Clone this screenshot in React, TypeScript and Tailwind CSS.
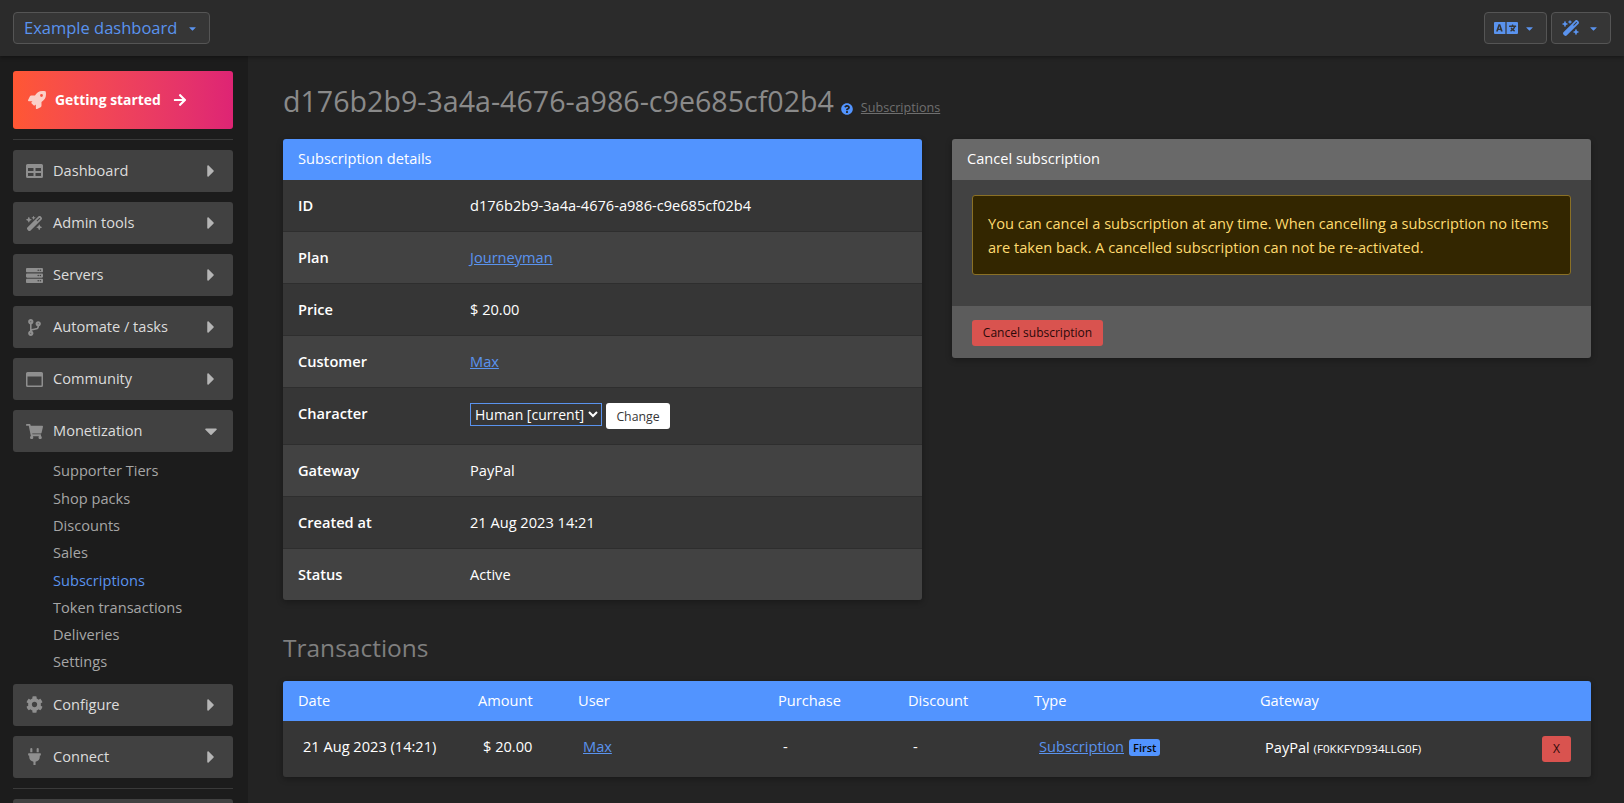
import {
  FaArrowRight,
  FaCaretDown,
  FaCaretRight,
  FaCodeBranch,
  FaCog,
  FaLanguage,
  FaPlug,
  FaQuestionCircle,
  FaRocket,
  FaServer,
  FaShoppingCart,
} from 'react-icons/fa';
import { FaWandMagicSparkles } from 'react-icons/fa6';
import type { ReactNode } from 'react';

function DashboardIcon() {
  return (
    <svg width="17" height="14" viewBox="0 0 17 14">
      <path
        fill="currentColor"
        fillRule="evenodd"
        d="M1.5 0h14A1.5 1.5 0 0 1 17 1.5v11a1.5 1.5 0 0 1-1.5 1.5h-14A1.5 1.5 0 0 1 0 12.5v-11A1.5 1.5 0 0 1 1.5 0ZM2 4v3h5.5V4H2Zm7.5 0v3H15V4H9.5ZM2 9v3h5.5V9H2Zm7.5 0v3H15V9H9.5Z"
      />
    </svg>
  );
}

function WindowIcon() {
  return (
    <svg width="17" height="15" viewBox="0 0 17 15">
      <path
        fill="currentColor"
        fillRule="evenodd"
        d="M1.5 0h14A1.5 1.5 0 0 1 17 1.5v12a1.5 1.5 0 0 1-1.5 1.5h-14A1.5 1.5 0 0 1 0 13.5v-12A1.5 1.5 0 0 1 1.5 0ZM1.5 4.5v8.5a.5.5 0 0 0 .5.5h13a.5.5 0 0 0 .5-.5V4.5h-14Z"
      />
    </svg>
  );
}

function NavItem({ icon, label, open }: { icon: ReactNode; label: string; open?: boolean }) {
  return (
    <div className="flex h-[42px] shrink-0 items-center rounded-[3px] bg-[#414141] pl-[13px] pr-[12px] text-[14.6px] text-[#dcdcdc]">
      <span className="flex w-[27px] shrink-0 items-center text-[17px] text-[#8f8f8f]">{icon}</span>
      <span className="flex-1">{label}</span>
      {open ? (
        <FaCaretDown className="text-[20px] text-[#b5b5b5]" />
      ) : (
        <FaCaretRight className="text-[20px] text-[#b5b5b5]" />
      )}
    </div>
  );
}

const subItems = [
  'Supporter Tiers',
  'Shop packs',
  'Discounts',
  'Sales',
  'Subscriptions',
  'Token transactions',
  'Deliveries',
  'Settings',
];

function Sidebar() {
  return (
    <aside className="flex h-[747px] w-[248px] shrink-0 flex-col overflow-hidden bg-[#1c1c1c] pl-[13px] pr-[15px] pt-[15px]">
      <div className="flex h-[58px] shrink-0 items-center rounded-[3px] bg-gradient-to-r from-[#ff5733] to-[#de2474] pl-[15px] text-[13.9px] font-bold text-white">
        <FaRocket className="mr-[9px] text-[18px] text-[#fbd0c8]" />
        <span>Getting started</span>
        <FaArrowRight className="ml-[12px] text-[14px]" />
      </div>
      <div className="my-[10px] h-px shrink-0 bg-[#3a3a3a]" />
      <div className="flex flex-col gap-[10px]">
        <NavItem icon={<DashboardIcon />} label="Dashboard" />
        <NavItem icon={<FaWandMagicSparkles />} label="Admin tools" />
        <NavItem icon={<FaServer />} label="Servers" />
        <NavItem icon={<FaCodeBranch />} label="Automate / tasks" />
        <NavItem icon={<WindowIcon />} label="Community" />
        <NavItem icon={<FaShoppingCart />} label="Monetization" open />
      </div>
      <ul className="mt-[5.7px] mb-[7.5px] flex flex-col pl-[40px] text-[14.6px] text-[#a6a6a6]">
        {subItems.map((item) => (
          <li
            key={item}
            className={`flex h-[27.3px] items-center ${item === 'Subscriptions' ? 'text-[#5a93ee]' : ''}`}
          >
            {item}
          </li>
        ))}
      </ul>
      <div className="flex flex-col gap-[10px]">
        <NavItem icon={<FaCog />} label="Configure" />
        <NavItem icon={<FaPlug />} label="Connect" />
      </div>
      <div className="my-[10px] h-px shrink-0 bg-[#3a3a3a]" />
      <div className="h-[42px] shrink-0 rounded-[3px] bg-[#414141]" />
    </aside>
  );
}

function TopBar() {
  return (
    <header className="relative z-10 flex h-[56px] shrink-0 items-center justify-between bg-[#2b2b2b] pl-[13px] pr-[13px] shadow-[0_1px_4px_rgba(0,0,0,0.4)]">
      <button className="flex h-[32px] w-[197px] items-center rounded-[4px] border border-[#555555] bg-[#363636] pl-[10px] text-[16.5px] text-[#5a93ee]">
        Example dashboard
        <FaCaretDown className="ml-[10px] text-[11px]" />
      </button>
      <div className="flex gap-[4px]">
        <button className="flex h-[32px] w-[63px] items-center rounded-[4px] border border-[#555555] bg-[#363636] pl-[9px] text-[#5a93ee]">
          <FaLanguage className="text-[24px]" />
          <FaCaretDown className="ml-[6px] text-[11px]" />
        </button>
        <button className="flex h-[32px] w-[60px] items-center rounded-[4px] border border-[#555555] bg-[#363636] pl-[10px] text-[#5a93ee]">
          <FaWandMagicSparkles className="text-[18px]" />
          <FaCaretDown className="ml-[8px] text-[11px]" />
        </button>
      </div>
    </header>
  );
}

const detailRows = [
  { label: 'ID', value: 'd176b2b9-3a4a-4676-a986-c9e685cf02b4' },
  { label: 'Plan', value: <a className="text-[#5a93ee] underline">Journeyman</a> },
  { label: 'Price', value: '$ 20.00' },
  { label: 'Customer', value: <a className="text-[#5a93ee] underline">Max</a> },
  {
    label: 'Character',
    value: (
      <div className="flex items-start gap-[4px]">
        <select className="h-[23px] w-[132px] border border-[#5a93ee] bg-[#363636] text-[14px] text-white">
          <option>Human [current]</option>
        </select>
        <button className="h-[26px] w-[64px] rounded-[3px] bg-white text-[12.3px] text-[#363636]">Change</button>
      </div>
    ),
  },
  { label: 'Gateway', value: 'PayPal' },
  { label: 'Created at', value: '21 Aug 2023 14:21' },
  { label: 'Status', value: 'Active' },
];

function SubscriptionDetails() {
  return (
    <div className="w-[639px] shrink-0 overflow-hidden rounded-[3px] shadow-[0_2px_6px_rgba(0,0,0,0.3)]">
      <div className="flex h-[41px] items-center bg-[#5294ff] px-[15px] pb-[1px] text-[14.6px] text-white">
        Subscription details
      </div>
      <table className="w-full table-fixed text-[14.6px] text-white">
        <colgroup>
          <col className="w-[172px]" />
          <col />
        </colgroup>
        <tbody>
          {detailRows.map((row, i) => (
            <tr key={row.label} className={`${i % 2 === 0 ? 'bg-[#363636]' : 'bg-[#424242]'} border-b border-[#2e2e2e] last:border-b-0`}>
              <td className="px-[15px] py-[15px] align-top leading-[21px] font-semibold">{row.label}</td>
              <td className="px-[15px] py-[15px] align-top leading-[21px]">{row.value}</td>
            </tr>
          ))}
        </tbody>
      </table>
    </div>
  );
}

function CancelCard() {
  return (
    <div className="w-[639px] shrink-0 self-start overflow-hidden rounded-[3px] shadow-[0_2px_6px_rgba(0,0,0,0.3)]">
      <div className="flex h-[41px] items-center bg-[#696969] px-[15px] pb-[1px] text-[14.6px] text-white">
        Cancel subscription
      </div>
      <div className="h-[126px] bg-[#424242] px-[20px] pt-[15px]">
        <div className="h-[80px] rounded-[3px] border border-[#8a7025] bg-[#332600] px-[15px] py-[14.5px] text-[14.6px] leading-[24px] text-[#ffdb70]">
          You can cancel a subscription at any time. When cancelling a subscription no items are taken back. A cancelled subscription can not be re-activated.
        </div>
      </div>
      <div className="flex h-[52px] items-start bg-[#5c5c5c] px-[20px] pt-[14px]">
        <button className="h-[26px] w-[131px] rounded-[3px] bg-[#d9534f] text-[12px] text-[#2b0a0a]">
          Cancel subscription
        </button>
      </div>
    </div>
  );
}

function TransactionsTable() {
  return (
    <div className="overflow-hidden rounded-[3px] shadow-[0_2px_6px_rgba(0,0,0,0.3)]">
      <table className="w-full table-fixed text-[14.6px] text-white">
        <colgroup>
          <col className="w-[180px]" />
          <col className="w-[100px]" />
          <col className="w-[200px]" />
          <col className="w-[130px]" />
          <col className="w-[126px]" />
          <col className="w-[226px]" />
          <col />
        </colgroup>
        <thead className="bg-[#5294ff]">
          <tr className="h-[40px] text-left">
            <th className="px-[15px] font-normal">Date</th>
            <th className="px-[15px] font-normal">Amount</th>
            <th className="px-[15px] font-normal">User</th>
            <th className="px-[15px] font-normal">Purchase</th>
            <th className="px-[15px] font-normal">Discount</th>
            <th className="px-[15px] font-normal">Type</th>
            <th className="px-[15px] font-normal">Gateway</th>
          </tr>
        </thead>
        <tbody>
          <tr className="h-[56px] bg-[#363636]">
            <td className="px-[20px] pb-[5px]">21 Aug 2023 (14:21)</td>
            <td className="px-[20px] pb-[5px]">$ 20.00</td>
            <td className="px-[20px] pb-[5px]">
              <a className="text-[#5a93ee] underline">Max</a>
            </td>
            <td className="px-[20px] pb-[5px]">-</td>
            <td className="px-[20px] pb-[5px]">-</td>
            <td className="px-[20px] pb-[5px]">
              <a className="text-[#5a93ee] underline">Subscription</a>
              <span className="ml-[5px] rounded-[3px] bg-[#5294ff] px-[4px] py-[1px] text-[11px] font-semibold text-[#0a0a0a]">First</span>
            </td>
            <td className="pl-[20px] pr-[20px]">
              <div className="flex items-center justify-between">
                <span className="pb-[3px]">
                  PayPal <span className="text-[11.6px]">(F0KKFYD934LLG0F)</span>
                </span>
                <button className="h-[26px] w-[29px] rounded-[3px] bg-[#d9534f] text-[12px] text-[#2b0a0a]">X</button>
              </div>
            </td>
          </tr>
        </tbody>
      </table>
    </div>
  );
}

export default function App() {
  return (
    <div className="flex h-[803px] flex-col overflow-hidden bg-[#232323] font-['Open_Sans',sans-serif]">
      <TopBar />
      <div className="flex min-h-0 flex-1">
        <Sidebar />
        <main className="min-w-0 flex-1 px-[35px] pr-[33px]">
          <div className="flex h-[83px] items-center pt-[8px]">
            <h1 className="text-[28.6px] leading-none text-[#8a8a8a]">d176b2b9-3a4a-4676-a986-c9e685cf02b4</h1>
            <FaQuestionCircle className="ml-[7px] mt-[14px] text-[12px] text-[#5294ff]" />
            <a className="ml-[8px] mt-[14px] text-[12.6px] text-[#6f6f6f] underline">Subscriptions</a>
          </div>
          <div className="flex justify-between">
            <SubscriptionDetails />
            <CancelCard />
          </div>
          <h2 className="mt-[31px] mb-[16px] text-[24.5px] leading-[34px] text-[#7f7f7f]">Transactions</h2>
          <TransactionsTable />
        </main>
      </div>
    </div>
  );
}
